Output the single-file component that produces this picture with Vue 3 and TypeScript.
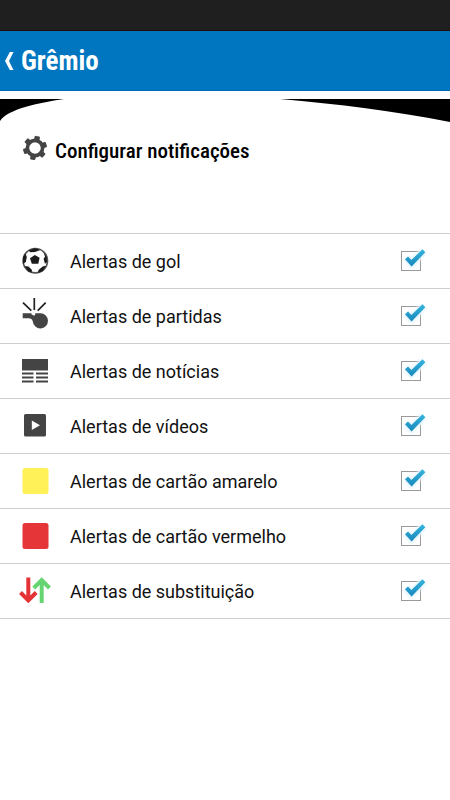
<script setup lang="ts">
import { ref } from 'vue'

interface Alert {
  id: string
  label: string
  on: boolean
}

const alerts = ref<Alert[]>([
  { id: 'gol', label: 'Alertas de gol', on: true },
  { id: 'partidas', label: 'Alertas de partidas', on: true },
  { id: 'noticias', label: 'Alertas de notícias', on: true },
  { id: 'videos', label: 'Alertas de vídeos', on: true },
  { id: 'amarelo', label: 'Alertas de cartão amarelo', on: true },
  { id: 'vermelho', label: 'Alertas de cartão vermelho', on: true },
  { id: 'substituicao', label: 'Alertas de substituição', on: true },
])
</script>

<template>
  <div class="screen">
    <div class="status"></div>
    <header class="bar">
      <button class="back" type="button" aria-label="Voltar">
        <svg width="10" height="20" viewBox="0 0 10 20" aria-hidden="true">
          <path d="M4.800 1H8.500L4 10 8.500 19H4.800L0 10Z" fill="#fff" />
        </svg>
      </button>
      <h1>Grêmio</h1>
    </header>

    <svg class="banner" viewBox="0 0 450 24" preserveAspectRatio="none" aria-hidden="true">
      <path d="M0 0H64C38 4 8 10 0 22Z" />
      <path d="M280 0H450V23C394 12 338 5 280 0Z" />
    </svg>

    <main>
      <div class="heading">
        <svg width="26" height="26" viewBox="-13 -13 26 26" aria-hidden="true">
          <g fill="#444" transform="rotate(12)">
            <rect v-for="n in 6" :key="n" x="-2.700" y="-12" width="5.400" height="6" rx="1" :transform="`rotate(${n * 60})`" />
          </g>
          <circle r="7.600" fill="none" stroke="#444" stroke-width="3.600" />
        </svg>
        <h2>Configurar notificações</h2>
      </div>

      <ul class="list">
        <li v-for="a in alerts" :key="a.id">
          <label class="row" :for="a.id">
            <svg class="icon" width="34" height="34" viewBox="0 0 34 34" aria-hidden="true">
              <g v-if="a.id === 'gol'">
                <circle cx="17.300" cy="16.700" r="12.200" fill="#fff" stroke="#555" stroke-width="1.700" />
                <g fill="#1c1c1c">
                  <path d="M16.800 10.900 21.600 13.800 20.300 19.800H13.800L12 14.300Z" />
                  <path d="M10.500 6.500 17 4.300 22.500 6 17 8 12.300 8.200Z" />
                  <path d="M25.500 8 28.600 12.500 29.200 18 27 19.800 25.600 15 27 12.500Z" />
                  <path d="M5 13 7.500 9.500 8.800 13 7.800 18 5 20Z" />
                  <path d="M6.500 22 10.500 22.500 14 26 13.500 28.800 10 27.300Z" />
                  <path d="M20.500 26 25 22.300 28 22 24.800 27 20 29Z" />
                </g>
              </g>
              <g v-else-if="a.id === 'partidas'">
                <path d="M16.300-1V11M5 3.700 13.300 11.700M27.700 3.700 19.700 11.700" fill="none" stroke="#222" stroke-width="1.700" />
                <path d="M4.700 14.300H13.500V15.500L16.500 16.800 17.500 14.300H22.500A7.600 7.600 0 1 1 14.800 22.500C14.300 20.300 13 19.300 10.500 19.200H4.700Z" fill="#444" />
              </g>
              <g v-else-if="a.id === 'noticias'">
                <path d="M4 5H30V16.500H4Z" fill="#444" />
                <path d="M4 19.500H15.500M18 19.500H30M4 23.500H15.500M18 23.500H30M4 27.500H15.500M18 27.500H30" stroke="#444" stroke-width="1.800" />
              </g>
              <g v-else-if="a.id === 'videos'">
                <rect x="6" y="5" width="22" height="22.500" rx="1.500" fill="#444" />
                <path d="M13.800 11.600 22 16.300 13.800 21Z" fill="#fff" />
              </g>
              <rect v-else-if="a.id === 'amarelo'" x="4.500" y="4" width="26" height="26" rx="2.500" fill="#fff157" />
              <rect v-else-if="a.id === 'vermelho'" x="4.500" y="4" width="26" height="26" rx="2.500" fill="#e53538" />
              <g v-else fill="none" stroke-width="4">
                <path d="M10.300 3.500V27M2.500 18.500 10.300 26.500 18.200 18.500" stroke="#e43236" />
                <path d="M23.700 29V6M15.800 14 23.700 6 31.500 14" stroke="#66d470" />
              </g>
            </svg>
            <span class="text">{{ a.label }}</span>
            <span class="check">
              <input :id="a.id" v-model="a.on" type="checkbox" />
              <svg v-if="a.on" class="tick" width="32" height="32" viewBox="0 0 32 32" aria-hidden="true">
                <defs>
                  <linearGradient :id="`tick-${a.id}`" x1="0" y1="0" x2="0" y2="1">
                    <stop offset="0" stop-color="#35b4de" />
                    <stop offset="1" stop-color="#1888bb" />
                  </linearGradient>
                </defs>
                <path class="glow" d="M9.500 14.300 14.500 19.500 26.500 7.500" fill="none" />
                <path d="M8 15.300 11 12.400 14.400 16 25.500 5.300 28.300 8.300 14.600 22.500Z" :fill="`url(#tick-${a.id})`" />
              </svg>
            </span>
          </label>
        </li>
      </ul>
    </main>
  </div>
</template>

<style>
body {
  background: #fff;
}
</style>

<style scoped>
.screen {
  min-height: 100vh;
  background: #fff;
  color: #111;
  font-family: Roboto, "Liberation Sans", sans-serif;
}

.status {
  height: 30px;
  background: #1f1f1f;
  border-bottom: 1px solid #200c08;
}

.bar {
  display: flex;
  align-items: center;
  gap: 6px;
  box-sizing: border-box;
  height: 60px;
  padding: 0 5px;
  background: #0076c0;
  border-bottom: 1px solid #0068b4;
  color: #fff;
}

.back {
  display: flex;
  padding: 0;
  border: 0;
  background: none;
  cursor: pointer;
}

h1,
h2 {
  margin: 0;
  font-family: "Liberation Sans Narrow", "Roboto Condensed", "DejaVu Sans Condensed", Roboto, sans-serif;
}

h1 {
  font-size: 27px;
  line-height: 32px;
  font-weight: 700;
}

.banner {
  display: block;
  width: 100%;
  height: 24px;
  margin-top: 8px;
}

.heading {
  display: flex;
  align-items: flex-start;
  gap: 7px;
  box-sizing: border-box;
  min-height: 110px;
  padding: 12px 22px;
}

h2 {
  padding-top: 2px;
  color: #000;
  font-size: 21px;
  line-height: 28px;
  font-weight: 500;
}

.list {
  margin: 0;
  padding: 0;
  list-style: none;
  border-top: 1px solid #cecece;
}

.row {
  display: flex;
  align-items: center;
  box-sizing: border-box;
  height: 55px;
  padding: 0 29px 0 18px;
  border-bottom: 1px solid #cecece;
  cursor: pointer;
}

.icon {
  flex: none;
  margin-right: 18px;
  overflow: visible;
}

.text {
  flex: 1;
  padding-top: 2px;
  font-size: 18px;
  line-height: 24px;
}

.check {
  position: relative;
  display: flex;
}

input {
  appearance: none;
  width: 20px;
  height: 20px;
  margin: 0;
  border: 1px solid #999;
  background: #fff;
}

.tick {
  position: absolute;
  top: -7px;
  left: -4px;
  pointer-events: none;
}

.glow {
  stroke: #e6f6fd;
  stroke-width: 8px;
  filter: blur(1px);
}
</style>
